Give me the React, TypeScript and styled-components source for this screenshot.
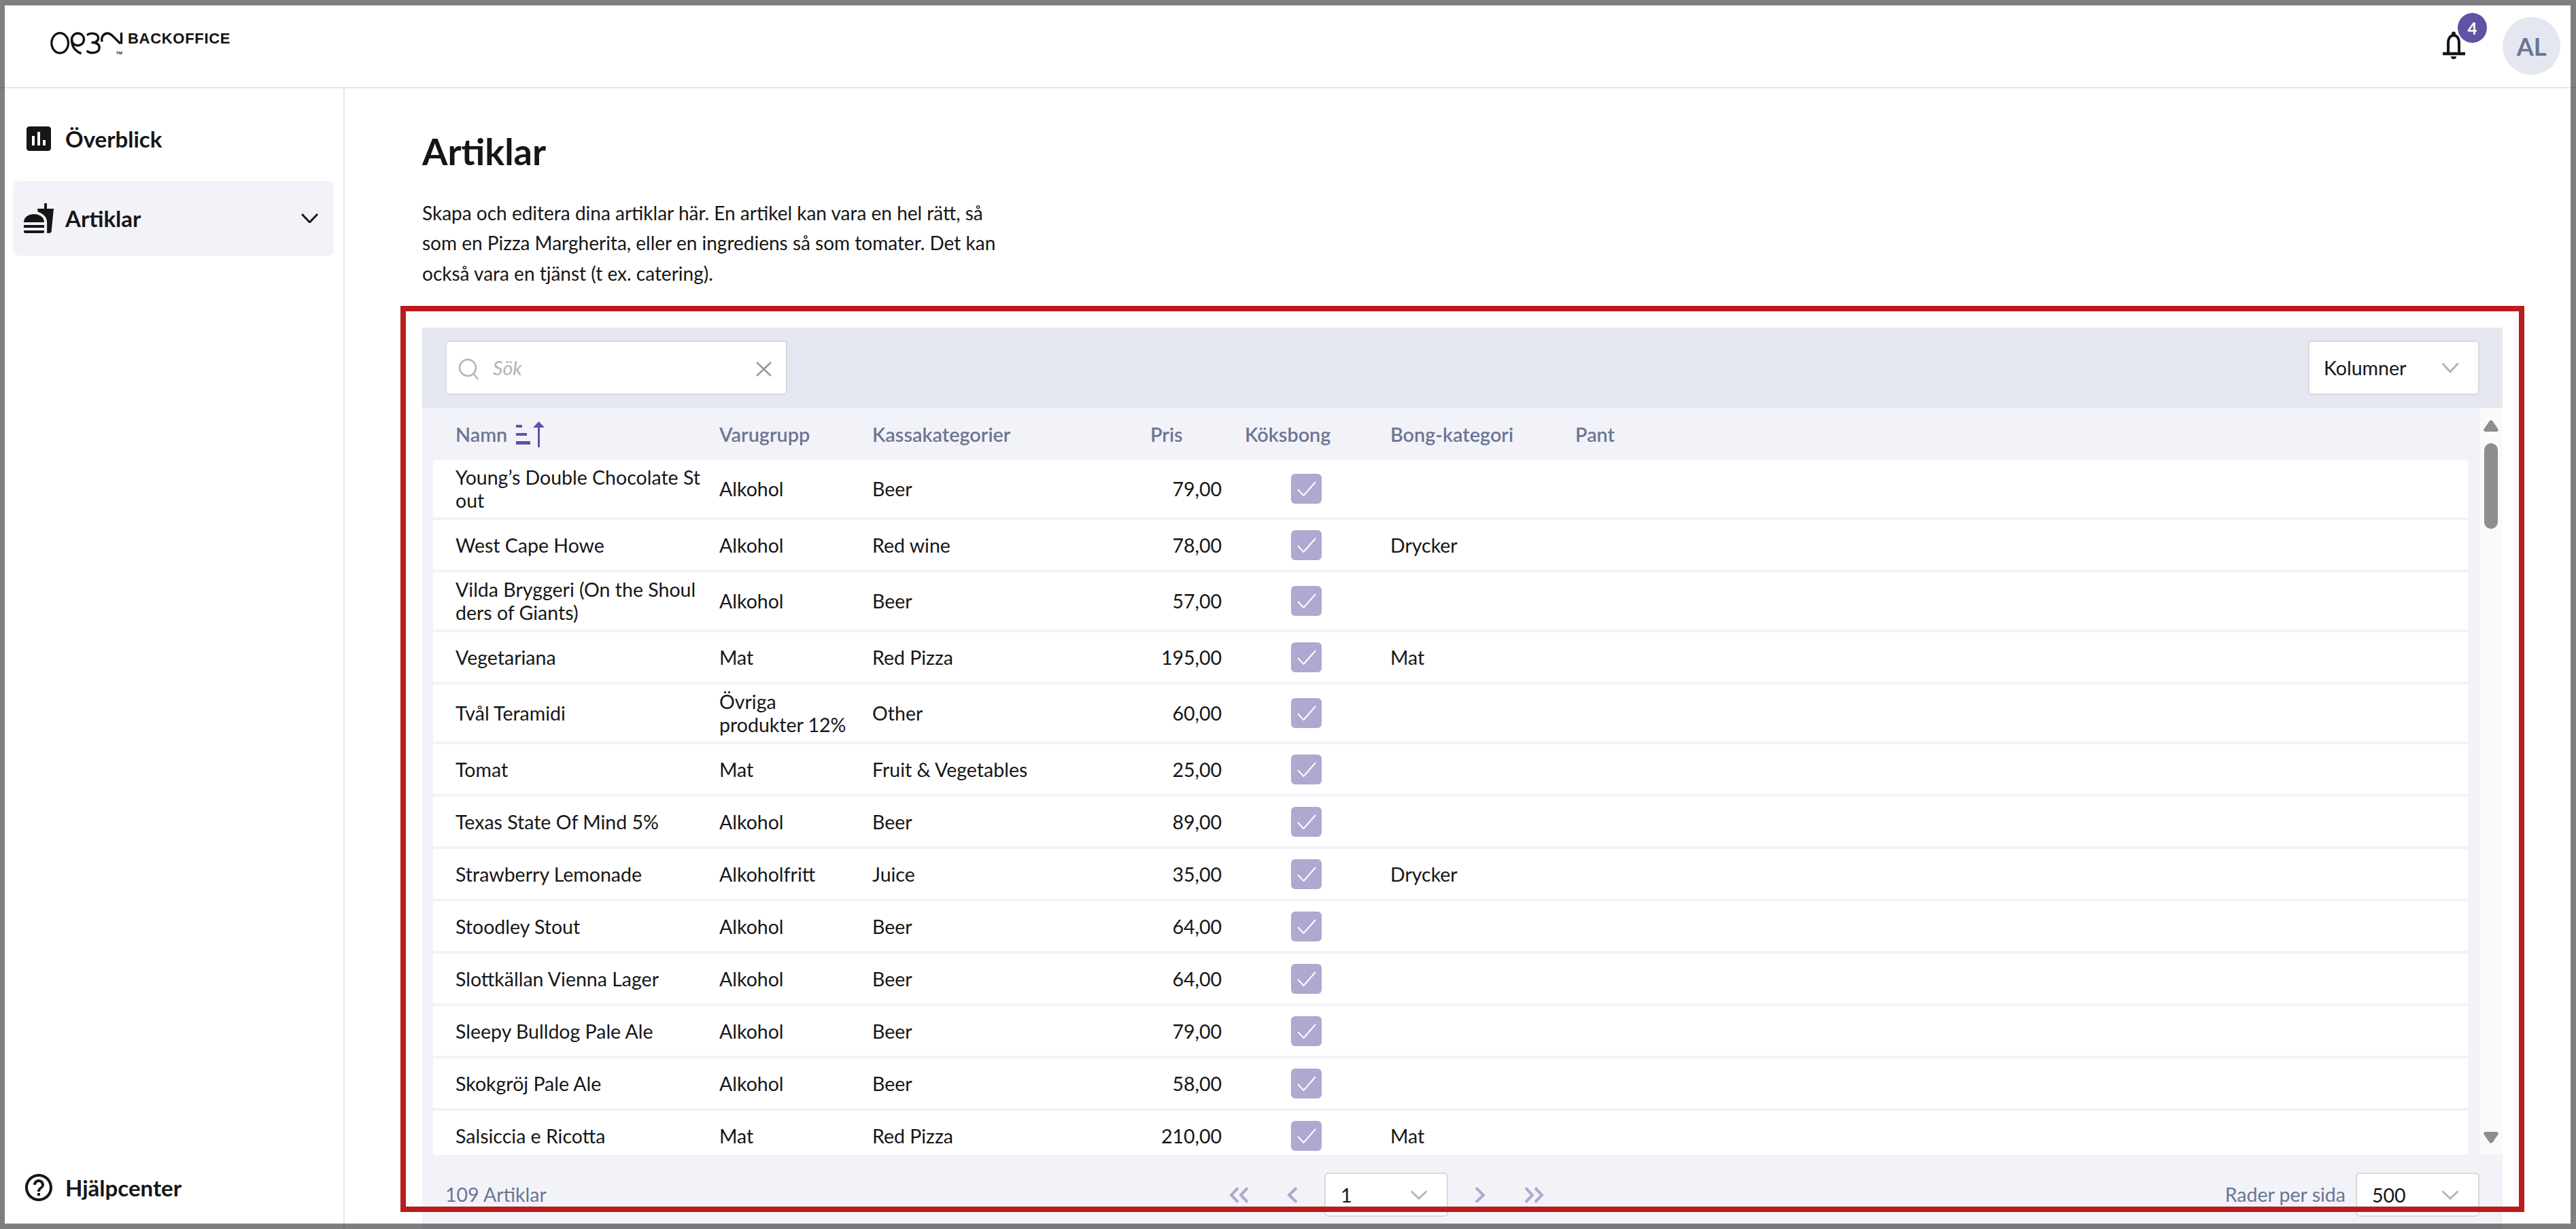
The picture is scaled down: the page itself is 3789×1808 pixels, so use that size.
import React from "react";
import styled, { createGlobalStyle } from "styled-components";
import { MdAssessment, MdFastfood, MdHelpOutline } from "react-icons/md";

interface Article {
  name: string;
  group: string;
  category: string;
  price: string;
  ticket?: string;
  tall?: boolean;
}

const articles: Article[] = [
  { name: "Young’s Double Chocolate Stout", group: "Alkohol", category: "Beer", price: "79,00", tall: true },
  { name: "West Cape Howe", group: "Alkohol", category: "Red wine", price: "78,00", ticket: "Drycker" },
  { name: "Vilda Bryggeri (On the Shoulders of Giants)", group: "Alkohol", category: "Beer", price: "57,00", tall: true },
  { name: "Vegetariana", group: "Mat", category: "Red Pizza", price: "195,00", ticket: "Mat" },
  { name: "Tvål Teramidi", group: "Övriga produkter 12%", category: "Other", price: "60,00", tall: true },
  { name: "Tomat", group: "Mat", category: "Fruit & Vegetables", price: "25,00" },
  { name: "Texas State Of Mind 5%", group: "Alkohol", category: "Beer", price: "89,00" },
  { name: "Strawberry Lemonade", group: "Alkoholfritt", category: "Juice", price: "35,00", ticket: "Drycker" },
  { name: "Stoodley Stout", group: "Alkohol", category: "Beer", price: "64,00" },
  { name: "Slottkällan Vienna Lager", group: "Alkohol", category: "Beer", price: "64,00" },
  { name: "Sleepy Bulldog Pale Ale", group: "Alkohol", category: "Beer", price: "79,00" },
  { name: "Skokgröj Pale Ale", group: "Alkohol", category: "Beer", price: "58,00" },
  { name: "Salsiccia e Ricotta", group: "Mat", category: "Red Pizza", price: "210,00", ticket: "Mat" },
];

const text = "#161616";
const muted = "#6b7594";
const purple = "#5e53a4";
const lilac = "#afa8d1";
const mist = "#f2f3f8";
const haze = "#e4e7f0";
const columns = "421px 225px 400px 114px 248px 272px 1fr";

const GlobalStyle = createGlobalStyle`
  * { box-sizing: border-box; }
  html, body { margin: 0; padding: 0; background: #fff; }
  body { font-family: Lato, "Liberation Sans", sans-serif; color: ${text}; }
`;

const Page = styled.div`
  position: relative;
  width: 3789px;
  height: 1808px;
  overflow: hidden;
  background: #fff;
`;

const ScreenFrame = styled.div`
  position: absolute;
  inset: 0;
  border-style: solid;
  border-color: rgba(0, 0, 0, 0.5);
  border-width: 8px 8px 8px 7px;
  pointer-events: none;
`;

const Highlight = styled.div`
  position: absolute;
  left: 589px;
  top: 450px;
  width: 3124px;
  height: 1333px;
  border: 8px solid #b91c1c;
  pointer-events: none;
`;

const TopBar = styled.header`
  position: absolute;
  left: 0;
  top: 0;
  width: 100%;
  height: 130px;
  border-bottom: 2px solid ${haze};
`;

const Logo = styled.div`
  position: absolute;
  left: 74px;
  top: 47px;
  width: 270px;
  height: 36px;
`;

const LogoMark = styled.svg`
  position: absolute;
  left: 0;
  top: 0;
  width: 107px;
  height: 34px;
`;

const LogoText = styled.span`
  position: absolute;
  left: 114px;
  top: -3px;
  font-family: "Liberation Sans", Arial, sans-serif;
  font-weight: 700;
  font-size: 22px;
  line-height: 26px;
  letter-spacing: 0.7px;
  color: #111;
`;

const LogoTm = styled.span`
  position: absolute;
  left: 97px;
  top: 27px;
  font-family: "Liberation Sans", Arial, sans-serif;
  font-weight: 700;
  font-size: 6px;
  line-height: 8px;
  color: #111;
`;

const Bell = styled.svg`
  position: absolute;
  left: 3590px;
  top: 44px;
  width: 40px;
  height: 46px;
`;

const Badge = styled.span`
  position: absolute;
  left: 3615px;
  top: 19px;
  width: 43px;
  height: 44px;
  border-radius: 50%;
  background: ${purple};
  color: #fff;
  font-size: 24px;
  font-weight: 700;
  display: flex;
  align-items: center;
  justify-content: center;
`;

const Avatar = styled.span`
  position: absolute;
  left: 3681px;
  top: 25px;
  width: 85px;
  height: 85px;
  border-radius: 50%;
  background: ${haze};
  color: ${muted};
  font-size: 36px;
  font-weight: 700;
  display: flex;
  align-items: center;
  justify-content: center;
`;

const SideBar = styled.nav`
  position: absolute;
  left: 0;
  top: 130px;
  width: 507px;
  height: 1678px;
  border-right: 2px solid ${haze};
`;

const NavItem = styled.div<{ $active?: boolean; $y: number }>`
  position: absolute;
  left: 19px;
  top: ${(p) => p.$y}px;
  width: 472px;
  height: 110px;
  padding-left: 14px;
  display: flex;
  align-items: center;
  border-radius: 8px;
  background: ${(p) => (p.$active ? mist : "transparent")};
  font-size: 33px;
  font-weight: 700;

  svg.main {
    width: 48px;
    height: 48px;
    margin-right: 15px;
    flex: none;
  }
`;

const NavChevron = styled.svg`
  position: absolute;
  left: 424px;
  top: 48px;
  width: 25px;
  height: 14px;
`;

const Main = styled.main`
  position: absolute;
  left: 621px;
  top: 130px;
  width: 3060px;
  height: 1678px;
`;

const Title = styled.h1`
  position: absolute;
  left: 0;
  top: 61px;
  margin: 0;
  font-size: 54px;
  line-height: 64px;
  font-weight: 700;
`;

const Intro = styled.p`
  position: absolute;
  left: 0;
  top: 161px;
  width: 875px;
  margin: 0;
  font-size: 28px;
  line-height: 44.4px;
`;

const TableCard = styled.section`
  position: absolute;
  left: 0;
  top: 352px;
  width: 3060px;
  height: 1326px;
  display: flex;
  flex-direction: column;
  background: ${mist};
`;

const Toolbar = styled.div`
  height: 118px;
  flex: none;
  padding: 0 34px;
  display: flex;
  align-items: center;
  justify-content: space-between;
  background: ${haze};
`;

const SearchBox = styled.label`
  position: relative;
  width: 503px;
  height: 80px;
  display: flex;
  align-items: center;
  background: #fff;
  border: 2px solid #d9d9d9;
  border-radius: 5px;
  font-size: 28.5px;
  font-style: italic;
  color: #b3b3b3;

  span {
    margin-left: 68px;
  }

  svg.search {
    position: absolute;
    left: 17px;
    top: 24px;
    width: 31px;
    height: 32px;
  }

  svg.clear {
    position: absolute;
    right: 21px;
    top: 29px;
    width: 23px;
    height: 22px;
  }
`;

const SelectBox = styled.div<{ $width: number }>`
  position: relative;
  width: ${(p) => p.$width}px;
  height: 80px;
  flex: none;
  display: flex;
  align-items: center;
  padding-left: 21px;
  background: #fff;
  border: 2px solid #d9d9d9;
  border-radius: 6px;
  font-size: 28.5px;

  svg {
    position: absolute;
    right: 28px;
    top: 30px;
    width: 26px;
    height: 16px;
  }
`;

const TableArea = styled.div`
  height: 1099px;
  flex: none;
  display: flex;
`;

const TableBody = styled.div`
  width: 3026px;
  overflow: hidden;
  padding: 0 17px 0 16px;
`;

const HeadRow = styled.div`
  height: 77px;
  display: grid;
  grid-template-columns: ${columns};
  align-items: center;
  font-size: 28.8px;
  font-weight: 600;
  color: ${muted};
`;

const HeadCell = styled.div<{ $indent?: number }>`
  display: flex;
  align-items: center;
  padding-left: ${(p) => p.$indent ?? 0}px;
`;

const SortIcon = styled.svg`
  width: 44px;
  height: 38px;
  margin-left: 13px;
`;

const Row = styled.div<{ $tall?: boolean }>`
  height: ${(p) => (p.$tall ? 84 : 73)}px;
  margin-bottom: 4px;
  display: grid;
  grid-template-columns: ${columns};
  align-items: center;
  background: #fff;
  font-size: 28.5px;
  line-height: 34px;
`;

const NameCell = styled.div`
  padding-left: 33px;
  padding-right: 28px;
  word-break: break-all;
`;

const GroupCell = styled.div`
  padding-right: 16px;
`;

const PriceCell = styled.div`
  text-align: right;
`;

const CheckCell = styled.div`
  padding-left: 102px;
  display: flex;
`;

const CheckMark = styled.span`
  width: 45px;
  height: 44px;
  display: flex;
  align-items: center;
  justify-content: center;
  border-radius: 6px;
  background: ${lilac};

  svg {
    width: 28px;
    height: 22px;
  }
`;

const ScrollTrack = styled.div`
  width: 34px;
  flex: none;
  display: flex;
  flex-direction: column;
  align-items: center;
  padding: 18px 0 17px;
  background: #fafafa;
`;

const ScrollArrow = styled.svg<{ $down?: boolean }>`
  width: 22px;
  height: 17px;
  flex: none;
  margin-top: ${(p) => (p.$down ? "auto" : "0")};
`;

const ScrollThumb = styled.div`
  width: 20px;
  height: 126px;
  margin-top: 17px;
  border-radius: 10px;
  background: #8e8e8e;
`;

const Footer = styled.footer`
  position: relative;
  flex: 1;
  font-size: 28.5px;
  color: ${muted};
`;

const Count = styled.span`
  position: absolute;
  left: 34px;
  top: 40px;
  line-height: 36px;
`;

const Pager = styled.div`
  position: absolute;
  left: 1187px;
  top: 26px;
  display: flex;
  align-items: center;
  height: 65px;
`;

const PagerIcon = styled.svg<{ $gap: number; $lead?: number; $width: number }>`
  width: ${(p) => p.$width}px;
  height: 24px;
  margin-left: ${(p) => p.$lead ?? 0}px;
  margin-right: ${(p) => p.$gap}px;
  flex: none;
`;

const FooterSelect = styled(SelectBox)`
  height: 65px;
  color: ${text};
  padding-left: 22px;

  svg {
    top: 24px;
    height: 14px;
  }
`;

const PageSize = styled.div`
  position: absolute;
  right: 34px;
  top: 26px;
  display: flex;
  align-items: center;

  > span {
    margin-right: 15px;
    position: relative;
    top: -1px;
  }
`;

const Chevron = () => (
  <svg viewBox="0 0 26 16" fill="none" stroke="#b3b3b3" strokeWidth="3" preserveAspectRatio="none">
    <path d="M1.5 1.5 13 14 24.5 1.5" />
  </svg>
);

const SortGlyph = () => (
  <SortIcon viewBox="0 0 44 38" fill="#5e53a4">
    <rect x="0" y="5" width="9" height="4" />
    <rect x="0" y="17" width="16" height="4" />
    <rect x="0" y="29" width="21" height="5" />
    <rect x="32" y="8" width="3" height="30" />
    <path d="M33.5 0 42 9H25z" />
  </SortIcon>
);

const Check = () => (
  <CheckMark>
    <svg viewBox="0 0 28 22" fill="none" stroke="#fff" strokeWidth="2">
      <path d="M1 12 9.5 21 27 1" />
    </svg>
  </CheckMark>
);

export default function App() {
  return (
    <Page>
      <GlobalStyle />
      <TopBar>
        <Logo>
          <LogoMark viewBox="103 82 320 102" fill="none" stroke="#111" strokeWidth="10">
            <ellipse cx="145" cy="131" rx="37" ry="44" />
            <circle cx="224" cy="115" r="27" />
            <path d="M197 115c0 30 15 52 42 62" />
            <path d="M264 96c14-12 50-10 50 13 0 14-13 20-30 20 22 0 35 8 35 22 0 24-38 30-56 14" />
            <path d="M331 125c-6-22 8-37 24-37 10 0 17 6 24 13l32 32" />
            <path d="M416 85v50" />
          </LogoMark>
          <LogoText>BACKOFFICE</LogoText>
          <LogoTm>TM</LogoTm>
        </Logo>
        <Bell viewBox="0 0 40 46" fill="none" stroke="#161616">
          <circle cx="19" cy="5.5" r="3" fill="#161616" stroke="none" />
          <path d="M11 33V19c0-7 3.500-11 8-11s8 4 8 11v14" strokeWidth="4" />
          <path d="M3 35h33" strokeWidth="4.500" />
          <path d="M15 39h8a4 4 0 0 1-8 0z" fill="#161616" stroke="none" />
        </Bell>
        <Badge>4</Badge>
        <Avatar>AL</Avatar>
      </TopBar>
      <SideBar>
        <NavItem $y={19}>
          <MdAssessment className="main" color={text} />
          Överblick
        </NavItem>
        <NavItem $y={136} $active>
          <MdFastfood className="main" color={text} />
          Artiklar
          <NavChevron viewBox="0 0 25 14" fill="none" stroke="#161616" strokeWidth="3">
            <path d="M1 1 12.500 13 24 1" />
          </NavChevron>
        </NavItem>
        <NavItem $y={1562}>
          <MdHelpOutline className="main" color={text} />
          Hjälpcenter
        </NavItem>
      </SideBar>
      <Main>
        <Title>Artiklar</Title>
        <Intro>
          Skapa och editera dina artiklar här. En artikel kan vara en hel rätt, så som en Pizza Margherita, eller en
          ingrediens så som tomater. Det kan också vara en tjänst (t ex. catering).
        </Intro>
        <TableCard>
          <Toolbar>
            <SearchBox>
              <svg className="search" viewBox="0 0 31 32" fill="none" stroke="#b3b3b3" strokeWidth="2.500">
                <circle cx="14" cy="14" r="12" />
                <path d="M22.500 23 29 31" />
              </svg>
              <span>Sök</span>
              <svg className="clear" viewBox="0 0 23 22" fill="none" stroke="#999" strokeWidth="2.500">
                <path d="M1 1 22 21M22 1 1 21" />
              </svg>
            </SearchBox>
            <SelectBox $width={252}>
              Kolumner
              <Chevron />
            </SelectBox>
          </Toolbar>
          <TableArea>
            <TableBody>
              <HeadRow>
                <HeadCell $indent={33}>
                  Namn
                  <SortGlyph />
                </HeadCell>
                <HeadCell>Varugrupp</HeadCell>
                <HeadCell>Kassakategorier</HeadCell>
                <HeadCell $indent={9}>Pris</HeadCell>
                <HeadCell $indent={34}>Köksbong</HeadCell>
                <HeadCell>Bong-kategori</HeadCell>
                <HeadCell>Pant</HeadCell>
              </HeadRow>
              {articles.map((article) => (
                <Row key={article.name} $tall={article.tall}>
                  <NameCell>{article.name}</NameCell>
                  <GroupCell>{article.group}</GroupCell>
                  <div>{article.category}</div>
                  <PriceCell>{article.price}</PriceCell>
                  <CheckCell>
                    <Check />
                  </CheckCell>
                  <div>{article.ticket}</div>
                  <div />
                </Row>
              ))}
            </TableBody>
            <ScrollTrack>
              <ScrollArrow viewBox="0 0 22 17" fill="#8e8e8e">
                <path d="M8.800 1.200a2.800 2.800 0 0 1 4.400 0l8 11.500c1.300 2 .3 4.300-2 4.300H2.800c-2.300 0-3.300-2.300-2-4.300z" />
              </ScrollArrow>
              <ScrollThumb />
              <ScrollArrow $down viewBox="0 0 22 17" fill="#8e8e8e">
                <path d="M8.800 15.800a2.800 2.800 0 0 0 4.400 0l8-11.500c1.300-2 .3-4.300-2-4.300H2.800C.5 0-.5 2.300.8 4.300z" />
              </ScrollArrow>
            </ScrollTrack>
          </TableArea>
          <Footer>
            <Count>109 Artiklar</Count>
            <Pager>
              <PagerIcon viewBox="0 0 29 24" $width={29} $gap={56} fill="none" stroke={lilac} strokeWidth="4">
                <path d="M13 1.500 3 12l10 10.500M27 1.500 17 12l10 10.500" />
              </PagerIcon>
              <PagerIcon viewBox="0 0 16 24" $width={16} $gap={39} fill="none" stroke={lilac} strokeWidth="4">
                <path d="M14 1.500 3 12l11 10.500" />
              </PagerIcon>
              <FooterSelect $width={182}>
                1
                <Chevron />
              </FooterSelect>
              <PagerIcon viewBox="0 0 16 24" $width={16} $lead={39} $gap={57} fill="none" stroke={lilac} strokeWidth="4">
                <path d="M2 1.500 13 12 2 22.500" />
              </PagerIcon>
              <PagerIcon viewBox="0 0 29 24" $width={29} $gap={0} fill="none" stroke={lilac} strokeWidth="4">
                <path d="M2 1.500 12 12 2 22.500M16 1.500 26 12 16 22.500" />
              </PagerIcon>
            </Pager>
            <PageSize>
              <span>Rader per sida</span>
              <FooterSelect $width={182}>
                500
                <Chevron />
              </FooterSelect>
            </PageSize>
          </Footer>
        </TableCard>
      </Main>
      <Highlight />
      <ScreenFrame />
    </Page>
  );
}
